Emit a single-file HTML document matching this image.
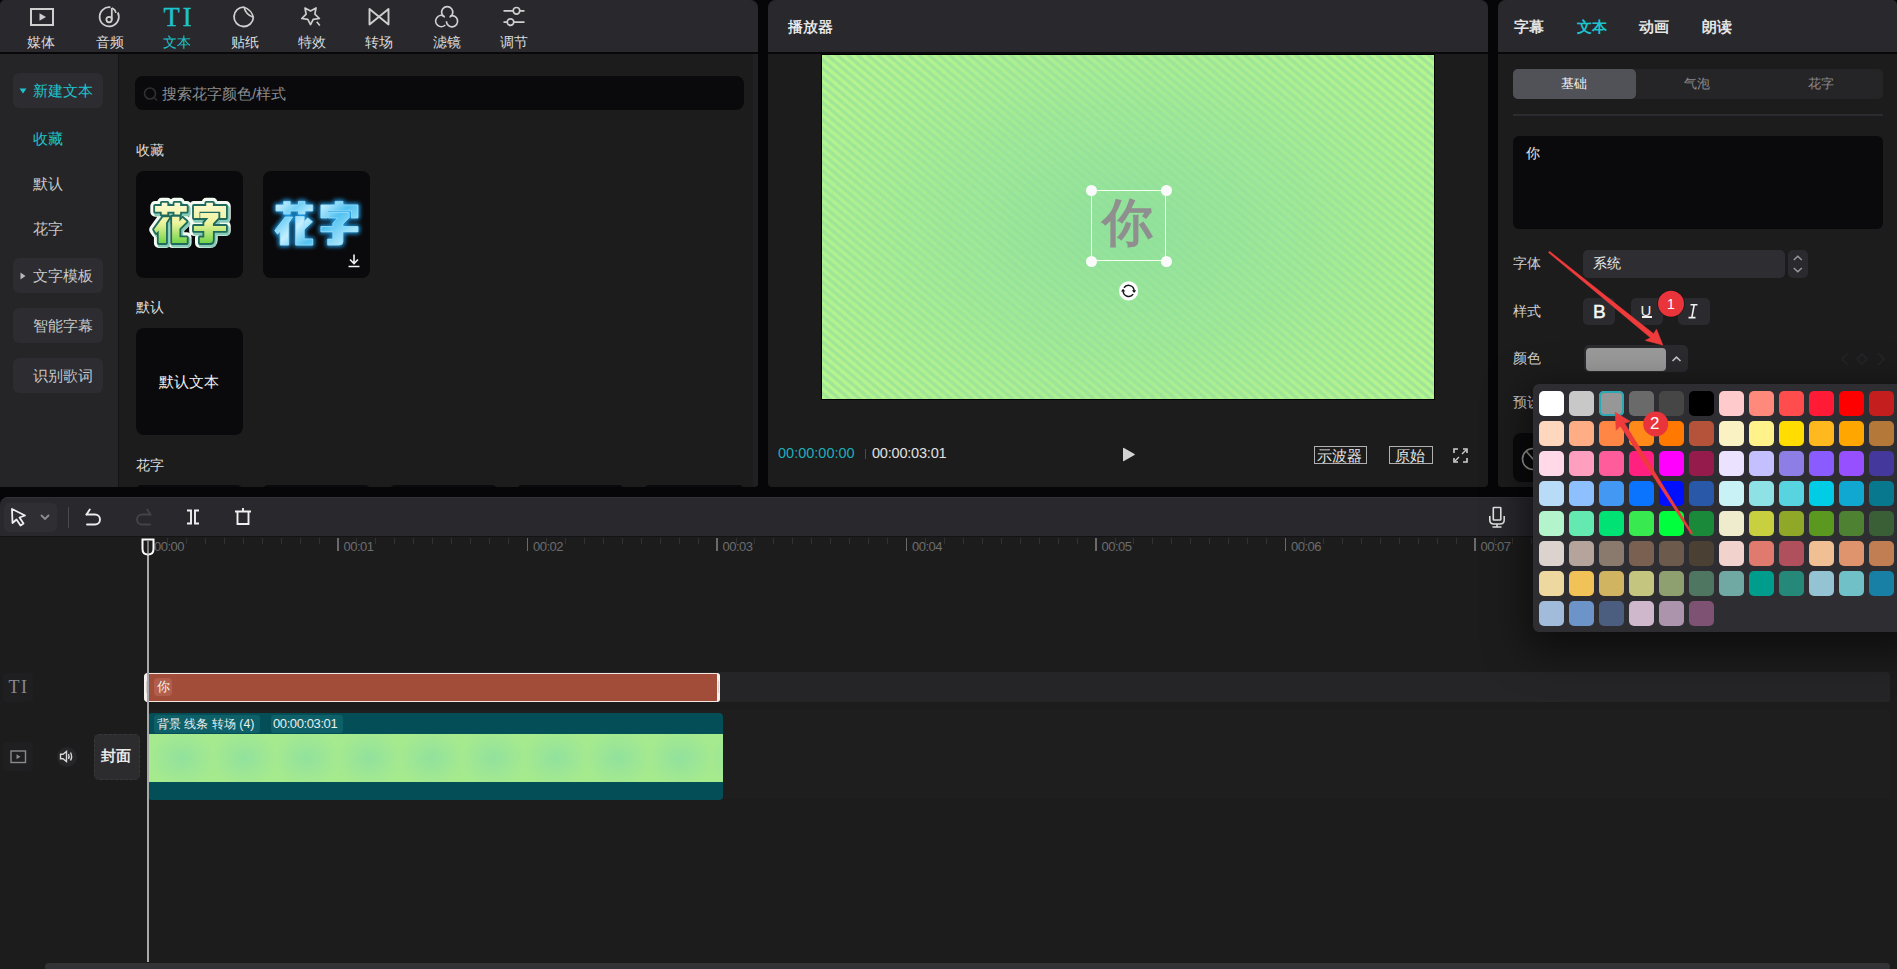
<!DOCTYPE html>
<html><head><meta charset="utf-8">
<style>
*{box-sizing:border-box;margin:0;padding:0}
html,body{width:1897px;height:969px;overflow:hidden;background:#060609;font-family:"Liberation Sans",sans-serif;color:#d8d8d8}
.a{position:absolute}
.panel{position:absolute;background:#1c1c1c;overflow:hidden}
.hdr{position:absolute;left:0;top:0;right:0;height:52px;background:#28282d;border-bottom:2px solid #08080b}
.t{position:absolute;white-space:nowrap;line-height:1}
.lbl{top:36px;font-size:13.5px;color:#dcdcdc;transform:translateX(-50%)}
.sbtn{left:13px;width:90px;height:35px;background:#2c2c31;border-radius:6px}
.sl{font-size:15px;color:#c8c8c8}
.cl{font-size:13.5px;color:#dedede}
.card{width:107px;height:107px;background:#0a0a0c;border-radius:8px}
.hd{width:11px;height:11px;border-radius:50%;background:#fafafa}
.rt{top:19px;font-size:15px;font-weight:700;color:#e4e4e4}
.rl{left:15px;font-size:13.5px;color:#d0d0d0}
.sb{top:298px;width:32px;height:27px;background:#2b2b2f;border-radius:5px}
.tk{top:43px;font-size:13px;color:#6c6c6e;letter-spacing:-0.5px}
.sw{width:25px;height:25px;border-radius:5px}
.ft{font-size:42px;font-weight:900;letter-spacing:-1px;line-height:1}
</style></head><body>

<!-- LEFT PANEL -->
<div class="panel" id="lp" style="left:0;top:0;width:758px;height:487px;border-radius:5px 8px 4px 0">

  <div class="hdr" style="height:54px"></div>
  <!-- toolbar icons -->
  <svg class="a" style="left:0;top:0" width="560" height="52" fill="none" stroke="#cfcfd0" stroke-width="2">
    <rect x="31" y="9" width="22" height="16" />
    <path d="M39.5 13.2 L46 17 L39.5 20.8 Z" fill="#cfcfd0" stroke="none"/>
    <path d="M117.8 12.5 A9.6 9.6 0 1 1 110.5 7.3" stroke-width="1.8"/>
    <path d="M111.8 8 V19.5" stroke-width="1.8"/>
    <circle cx="109.1" cy="19.6" r="2.7" stroke-width="1.8"/>
    <path d="M111.8 8 Q115.5 9.5 115.8 13" stroke-width="1.7"/>
    <path d="M253.4 17.3 A9.7 9.7 0 1 1 244.1 7.1" stroke-width="1.8"/>
    <path d="M244.1 7.1 Q245.5 14.5 253.4 17.3" stroke-width="1.7"/>
    <path d="M244.1 7.1 Q251.5 10 253.4 17.3" stroke-width="1.5"/>
    <path d="M310.5 24.6 L307.8 19.3 L301.8 18.5 L306.1 14.2 L305.0 8.0 L310.5 11.0 L316.0 8.0 L314.9 14.2 L319.4 18.5 L313.2 19.3 Z" stroke-width="1.7" stroke-linejoin="round"/>
    <path d="M316.8 21.8 L319.8 25.6" stroke-width="1.6"/>
    <path d="M369.5 9 L388.5 24.5 V9 L369.5 24.5 Z" stroke-width="1.9" stroke-linejoin="round"/>
    <path d="M444.8 17.3 A5.6 5.6 0 1 1 449.6 17.3" stroke-width="1.7"/>
    <path d="M445.3 25.0 A5.6 5.6 0 1 1 444.1 16.2" stroke-width="1.7"/>
    <path d="M450.1 16.0 A5.6 5.6 0 1 1 446.4 21.3" stroke-width="1.7"/>
    <path d="M503.5 10.8 H513 M520 10.8 H524.5 M503.5 22.1 H507 M514 22.1 H524.5" stroke-width="1.7"/>
    <circle cx="516.5" cy="10.8" r="3.3" stroke-width="1.7"/>
    <circle cx="510.5" cy="22.1" r="3.3" stroke-width="1.7"/>
  </svg>
  <div class="t" style="left:163.5px;top:4.2px;font-family:'Liberation Serif',serif;font-size:26.5px;color:#1ec4cd;letter-spacing:3px;-webkit-text-stroke:0.4px #1ec4cd">TI</div>
  <div class="t lbl" style="left:41px">媒体</div>
  <div class="t lbl" style="left:109.6px">音频</div>
  <div class="t lbl" style="left:176.5px;color:#1ec4cd">文本</div>
  <div class="t lbl" style="left:244.5px">贴纸</div>
  <div class="t lbl" style="left:311.7px">特效</div>
  <div class="t lbl" style="left:379px">转场</div>
  <div class="t lbl" style="left:446.5px">滤镜</div>
  <div class="t lbl" style="left:514px">调节</div>

  <div class="a" style="left:0;top:54px;width:118px;height:433px;background:#252527"></div>
  <div class="a" style="left:118px;top:54px;width:1px;height:433px;background:#141416"></div>
  <div class="a" style="left:753px;top:54px;width:5px;height:433px;background:#202022"></div>
  <!-- sidebar -->
  <div class="a sbtn" style="top:73px"></div>
  <svg class="a" style="left:19px;top:88px" width="8" height="6"><path d="M0.5 0.5 H7.5 L4 5.5 Z" fill="#1ec4cd"/></svg>
  <div class="t sl" style="left:33px;top:83px;color:#1ec4cd">新建文本</div>
  <div class="t sl" style="left:33px;top:131px;color:#1ec4cd">收藏</div>
  <div class="t sl" style="left:33px;top:176px">默认</div>
  <div class="t sl" style="left:33px;top:221px">花字</div>
  <div class="a sbtn" style="top:258px"></div>
  <svg class="a" style="left:20px;top:272px" width="6" height="8"><path d="M0.5 0.5 V7.5 L5.5 4 Z" fill="#b8b8b8"/></svg>
  <div class="t sl" style="left:33px;top:268px">文字模板</div>
  <div class="a sbtn" style="top:308px"></div>
  <div class="t sl" style="left:33px;top:318px">智能字幕</div>
  <div class="a sbtn" style="top:358px"></div>
  <div class="t sl" style="left:33px;top:368px">识别歌词</div>

  <!-- content -->
  <div class="a" style="left:135px;top:76px;width:609px;height:34px;background:#0a0a0c;border-radius:8px"></div>
  <svg class="a" style="left:142px;top:86px" width="18" height="18" fill="none" stroke="#303033" stroke-width="1.6"><circle cx="8" cy="7.5" r="5.5"/><path d="M12 11.5 L15 14.5"/></svg>
  <div class="t" style="left:162px;top:86px;font-size:15px;color:#8c8c8e">搜索花字颜色/样式</div>
  <div class="t cl" style="left:136px;top:144px">收藏</div>

  <div class="a card" style="left:136px;top:171px;overflow:hidden">
    <svg class="a" style="left:0;top:0" width="107" height="107" stroke-linejoin="round" stroke-linecap="round">
      <defs>
        <path id="hz" d="M1.8 4.4 H9.5 V0.9 H16 V4.4 H24.2 V0.9 H30.8 V4.4 H38.5 V10.5 H30.8 V13.6 H24.2 V10.5 H16 V13.6 H9.5 V10.5 H1.8 Z M11 16.5 H18.5 L14.5 22.5 V44.6 H6 V31 L3.2 33.6 L0.6 29.9 Z M21.5 16 H30 V38.4 H38.5 V44.6 H21.5 Z M33.5 17.3 L38.3 21.3 L30 29 L30 21.2 Z M61 0.9 H68.7 V4.4 H83.8 V17.5 H77.2 V10.5 H53.2 V17.5 H46.7 V4.4 H61 Z M54 12 H75 V17.2 L68.7 23.5 V26 H83.8 V31.4 H68.7 V41 Q68.7 44.6 65 44.6 H53.5 V38.6 H58.7 V31.4 H46.7 V26 H58.7 V22.5 L63.5 17.5 H54 Z"/>
        <linearGradient id="g1" x1="0" y1="0" x2="0" y2="1"><stop offset="0" stop-color="#fbf8d2"/><stop offset="0.5" stop-color="#eef49c"/><stop offset="1" stop-color="#72d44a"/></linearGradient>
        <linearGradient id="g2" x1="0" y1="0" x2="1" y2="0.6"><stop offset="0" stop-color="#e2f6ff"/><stop offset="0.25" stop-color="#70d0f5"/><stop offset="0.45" stop-color="#c4efff"/><stop offset="0.7" stop-color="#52c2f0"/><stop offset="1" stop-color="#a6e4fb"/></linearGradient>
      </defs>
      <g transform="translate(17.5 31) scale(0.865 0.92)">
        <use href="#hz" fill="#f4fbf2" stroke="#f4fbf2" stroke-width="11"/>
        <use href="#hz" transform="translate(1.6 2.2)" fill="#86ccb6" stroke="#86ccb6" stroke-width="5.5"/>
        <use href="#hz" fill="#1f6a5c" stroke="#1f6a5c" stroke-width="4.2"/>
        <use href="#hz" fill="url(#g1)"/>
      </g>
    </svg>
  </div>
  <div class="a card" style="left:263px;top:171px;overflow:hidden">
    <svg class="a" style="left:0;top:0" width="107" height="107" stroke-linejoin="round">
      <g transform="translate(11.2 29.5)">
        <use href="#hz" fill="#1e9be6" stroke="#1e9be6" stroke-width="3.5" style="filter:blur(2px)"/>
        <use href="#hz" fill="url(#g2)" stroke="#9fe0fa" stroke-width="0.8"/>
      </g>
    </svg>
    <svg class="a" style="left:84px;top:82px" width="14" height="15" fill="none" stroke="#f4f4f4" stroke-width="1.6"><path d="M7 1.5 V10 M3 6.5 L7 10.5 L11 6.5 M1.5 13.5 H12.5"/></svg>
  </div>
  <div class="t cl" style="left:136px;top:301px">默认</div>
  <div class="a card" style="left:136px;top:328px"></div>
  <div class="t" style="left:159px;top:374px;font-size:15px;color:#f0f0f0">默认文本</div>
  <div class="t cl" style="left:136px;top:459px">花字</div>
  <div class="a" style="left:136px;top:485px;width:106px;height:10px;background:#0a0a0c;border-radius:8px"></div>
  <div class="a" style="left:263px;top:485px;width:107px;height:10px;background:#0a0a0c;border-radius:8px"></div>
  <div class="a" style="left:390px;top:485px;width:107px;height:10px;background:#0a0a0c;border-radius:8px"></div>
  <div class="a" style="left:517px;top:485px;width:107px;height:10px;background:#0a0a0c;border-radius:8px"></div>
  <div class="a" style="left:644px;top:485px;width:100px;height:10px;background:#0a0a0c;border-radius:8px"></div>
</div>

<!-- PLAYER PANEL -->
<div class="panel" id="pp" style="left:768px;top:0;width:720px;height:487px;border-radius:8px 8px 4px 4px">
  <div class="hdr" style="height:54px"></div>
  <div class="t" style="left:20px;top:18.5px;font-size:15px;color:#f6f6f6;-webkit-text-stroke:0.3px #f6f6f6">播放器</div>
  <div class="a" style="left:53px;top:54px;width:614px;height:346px;background:#000"></div>
  <div class="a" id="video" style="left:54px;top:55px;width:612px;height:344px;overflow:hidden;background:radial-gradient(ellipse 340px 230px at 306px 172px, #8fe09c 0%, #98e49a 45%, #a6ea92 100%)">
    <div class="a" style="left:0;top:0;width:612px;height:344px;
      background:repeating-linear-gradient(40deg, rgba(188,248,140,0.75) 0px, rgba(188,248,140,0.75) 2.9px, rgba(150,224,160,0.4) 3.3px, rgba(150,224,160,0.4) 6.2px, rgba(188,248,140,0.75) 6.55px);
      -webkit-mask-image:radial-gradient(ellipse 380px 250px at 306px 172px, rgba(0,0,0,0.05) 0%, rgba(0,0,0,0.35) 50%, rgba(0,0,0,1) 100%)"></div>
  </div>
  <div class="a" style="left:323px;top:190px;width:75px;height:71px;border:1.5px solid #f4fff0"></div>
  <div class="t" style="left:334px;top:197px;font-size:51px;color:#8f8f8f;-webkit-text-stroke:1.6px #8f8f8f">你</div>
  <div class="a hd" style="left:317.5px;top:184.5px"></div>
  <div class="a hd" style="left:392.5px;top:184.5px"></div>
  <div class="a hd" style="left:317.5px;top:255.5px"></div>
  <div class="a hd" style="left:392.5px;top:255.5px"></div>
  <svg class="a" style="left:350px;top:281px" width="21" height="21">
    <circle cx="10.6" cy="9.9" r="9.6" fill="#fff"/>
    <path d="M6.0 6.7 A5.6 5.6 0 0 1 16.1 9.6" fill="none" stroke="#141414" stroke-width="1.5"/>
    <path d="M15.2 13.1 A5.6 5.6 0 0 1 5.1 10.2" fill="none" stroke="#141414" stroke-width="1.5"/>
    <path d="M13.9 9.2 L18.2 9.2 L16.1 12 Z" fill="#141414"/>
    <path d="M3.0 10.6 L7.3 10.6 L5.1 7.8 Z" fill="#141414"/>
  </svg>
  <div class="t" style="left:10px;top:446px;font-size:14.5px;color:#20adbb">00:00:00:00</div>
  <div class="a" style="left:97px;top:449px;width:1px;height:10px;background:#4a4a4a"></div>
  <div class="t" style="left:104px;top:446px;font-size:14.5px;color:#e0e0e0;letter-spacing:-0.2px">00:00:03:01</div>
  <svg class="a" style="left:354px;top:447px" width="14" height="16"><path d="M1 1.5 Q1 0.5 2 1 L12.5 7 Q13.3 7.5 12.5 8 L2 14 Q1 14.5 1 13.5 Z" fill="#d2d2d2"/></svg>
  <div class="a" style="left:546px;top:446px;width:53px;height:18px;border:1.5px solid #b0b0b0"></div>
  <div class="t" style="left:549px;top:447.5px;font-size:15px;color:#e6e6e6">示波器</div>
  <div class="a" style="left:621px;top:446px;width:44px;height:18px;border:1.5px solid #b0b0b0"></div>
  <div class="t" style="left:627px;top:447.5px;font-size:15px;color:#e6e6e6">原始</div>
  <svg class="a" style="left:685px;top:448px" width="15" height="15" fill="none" stroke="#d0d0d0" stroke-width="1.6">
    <path d="M1 5 V1 H5 M10 1 H14 V5 M14 10 V14 H10 M5 14 H1 V10"/>
    <path d="M9 6 L13 2 M6 9 L2 13" stroke-width="1.3"/>
  </svg>
</div>

<!-- RIGHT PANEL -->
<div class="panel" id="rp" style="left:1498px;top:0;width:399px;height:487px;border-radius:8px 5px 0 4px">
  <div class="hdr" style="height:54px"></div>
  <div class="t rt" style="left:16px">字幕</div>
  <div class="t rt" style="left:79px;color:#1ec4cd">文本</div>
  <div class="t rt" style="left:141px">动画</div>
  <div class="t rt" style="left:204px">朗读</div>
  <div class="a" style="left:15px;top:69px;width:370px;height:30px;background:#252528;border-radius:5px"></div>
  <div class="a" style="left:15px;top:69px;width:123px;height:30px;background:#515158;border-radius:5px"></div>
  <div class="t" style="left:63px;top:77px;font-size:13px;color:#f4f4f4">基础</div>
  <div class="t" style="left:186px;top:77px;font-size:13px;color:#8a8a8c">气泡</div>
  <div class="t" style="left:310px;top:77px;font-size:13px;color:#8a8a8c">花字</div>
  <div class="a" style="left:15px;top:114px;width:370px;height:2px;background:#2c2c30"></div>
  <div class="a" style="left:15px;top:136px;width:370px;height:93px;background:#0a0a0c;border-radius:6px"></div>
  <div class="t" style="left:28px;top:146px;font-size:14px;color:#eaeaea">你</div>
  <div class="t rl" style="top:257px">字体</div>
  <div class="a" style="left:85px;top:250px;width:202px;height:28px;background:#2e2e32;border-radius:5px"></div>
  <div class="t" style="left:95px;top:257px;font-size:13.5px;color:#e8e8e8">系统</div>
  <div class="a" style="left:290px;top:250px;width:20px;height:28px;background:#2a2a2e;border-radius:5px"></div>
  <svg class="a" style="left:290px;top:250px" width="20" height="28" fill="none" stroke="#9a9a9c" stroke-width="1.4"><path d="M5.8 10 L9.8 6.3 L13.8 10 M5.8 18 L9.8 21.7 L13.8 18"/></svg>
  <div class="t rl" style="top:305px">样式</div>
  <div class="a sb" style="left:85px"></div>
  <div class="t" style="left:95px;top:301.5px;font-size:19px;color:#f6f6f6;-webkit-text-stroke:0.5px #f6f6f6">B</div>
  <div class="a sb" style="left:133px"></div>
  <div class="t" style="left:142.5px;top:302.5px;font-size:15px;color:#f0f0f0">U</div>
  <div class="a" style="left:143.5px;top:316.3px;width:10.5px;height:1.7px;background:#f0f0f0"></div>
  <div class="a sb" style="left:180px"></div>
  <svg class="a" style="left:188px;top:302px" width="14" height="18" fill="none" stroke="#f0f0f0" stroke-width="1.6"><path d="M4.5 2.8 H11.5 M2.5 15.6 H9.5 M8.2 2.8 L5.8 15.6"/></svg>
  <div class="t rl" style="top:352px">颜色</div>
  <div class="a" style="left:86px;top:345px;width:104px;height:27px;background:#2b2b2f;border-radius:5px"></div>
  <div class="a" style="left:87.5px;top:347.5px;width:80.5px;height:23px;background:#9a9a9a;border-radius:4px"></div>
  <svg class="a" style="left:170px;top:352px" width="17" height="14" fill="none" stroke="#c6c6c8" stroke-width="1.6"><path d="M4.5 9 L8.5 5.2 L12.5 9"/></svg>
  <svg class="a" style="left:340px;top:351px" width="50" height="16" fill="none" stroke="#252529" stroke-width="1.6"><path d="M10 2 L4 8 L10 14 M40 2 L46 8 L40 14 M24 3 L29 8 L24 13 L19 8 Z"/></svg>
  <div class="t rl" style="top:396px">预设</div>
  <div class="a" style="left:15px;top:433px;width:70px;height:49px;background:#0a0a0c;border-radius:8px"></div>
  <svg class="a" style="left:22px;top:446px" width="26" height="26" fill="none" stroke="#9a9a9a" stroke-width="1.6"><circle cx="13" cy="13" r="10.5"/><path d="M6 5 L20 21"/></svg>
</div>

<!-- TIMELINE -->
<div class="panel" id="tl" style="left:0;top:497px;width:1897px;height:472px;border-radius:8px 8px 0 0">
  <div class="a" style="left:0;top:0;width:1897px;height:40px;background:#28282d;border-bottom:1px solid #141416"></div>
  <div class="a" style="left:0;top:0;width:1897px;height:1px;background:#313136"></div>
  <div class="a" style="left:4px;top:6px;width:53px;height:29px;background:#2e2e33;border-radius:5px"></div>
  <svg class="a" style="left:8px;top:8px" width="24" height="26" fill="none" stroke="#f0f0f0" stroke-width="1.8" stroke-linejoin="round"><path d="M4 4 L17 10.5 L11.5 12.5 L15.5 18.5 L12.5 20.5 L8.5 14.5 L4.5 18 Z"/></svg>
  <svg class="a" style="left:38px;top:15px" width="14" height="10" fill="none" stroke="#8e8e90" stroke-width="1.8"><path d="M3 3 L7 7 L11 3"/></svg>
  <div class="a" style="left:68px;top:10px;width:1px;height:21px;background:#4a4a4e"></div>
  <svg class="a" style="left:82px;top:9px" width="22" height="20" fill="none" stroke="#ececec" stroke-width="1.9" stroke-linejoin="round" stroke-linecap="round"><path d="M4.5 8.5 H13 A5 5 0 0 1 13 18.5 H5"/><path d="M7.8 3.5 L4.5 8.5"/></svg>
  <svg class="a" style="left:133px;top:9px" width="22" height="20" fill="none" stroke="#444448" stroke-width="1.9" stroke-linejoin="round" stroke-linecap="round"><path d="M17.5 8.5 H9 A5 5 0 0 0 9 18.5 H17"/><path d="M14.2 3.5 L17.5 8.5"/></svg>
  <svg class="a" style="left:184px;top:10px" width="18" height="20" fill="none" stroke="#f0f0f0" stroke-width="1.9"><path d="M3 3.5 H7 V16.5 H3 M15 3.5 H11 V16.5 H15"/></svg>
  <svg class="a" style="left:232px;top:9px" width="22" height="22" fill="none" stroke="#f0f0f0" stroke-width="1.9"><path d="M3 5.5 H19 M11 2 V5.5 M5.5 5.5 V18 H16.5 V5.5"/></svg>
  <svg class="a" style="left:1486px;top:9px" width="22" height="22" fill="none" stroke="#e4e4e4" stroke-width="1.6"><rect x="7.3" y="1.5" width="7.5" height="12.5" rx="0.5"/><path d="M3.8 10 V14 Q3.8 18 8 18 H14 Q18.2 18 18.2 14 V10 M11 18 V21 M6.5 21 H15.5"/></svg>
  <div class="a" style="left:0;top:41px;width:1897px;height:431px;background:#1c1c1c"></div>
<div class="a" style="left:166.9px;top:41px;width:1px;height:6px;background:#323235"></div>
<div class="a" style="left:185.9px;top:41px;width:1px;height:6px;background:#323235"></div>
<div class="a" style="left:204.8px;top:41px;width:1px;height:6px;background:#323235"></div>
<div class="a" style="left:223.8px;top:41px;width:1px;height:6px;background:#323235"></div>
<div class="a" style="left:242.8px;top:41px;width:1px;height:6px;background:#323235"></div>
<div class="a" style="left:261.7px;top:41px;width:1px;height:6px;background:#323235"></div>
<div class="a" style="left:280.6px;top:41px;width:1px;height:6px;background:#323235"></div>
<div class="a" style="left:299.6px;top:41px;width:1px;height:6px;background:#323235"></div>
<div class="a" style="left:318.5px;top:41px;width:1px;height:6px;background:#323235"></div>
<div class="t tk" style="left:154.0px">00:00</div>
<div class="a" style="left:356.4px;top:41px;width:1px;height:6px;background:#323235"></div>
<div class="a" style="left:375.4px;top:41px;width:1px;height:6px;background:#323235"></div>
<div class="a" style="left:394.4px;top:41px;width:1px;height:6px;background:#323235"></div>
<div class="a" style="left:413.3px;top:41px;width:1px;height:6px;background:#323235"></div>
<div class="a" style="left:432.2px;top:41px;width:1px;height:6px;background:#323235"></div>
<div class="a" style="left:451.2px;top:41px;width:1px;height:6px;background:#323235"></div>
<div class="a" style="left:470.1px;top:41px;width:1px;height:6px;background:#323235"></div>
<div class="a" style="left:489.1px;top:41px;width:1px;height:6px;background:#323235"></div>
<div class="a" style="left:508.0px;top:41px;width:1px;height:6px;background:#323235"></div>
<div class="a" style="left:337.0px;top:41px;width:1.5px;height:13px;background:#6a6a6c"></div>
<div class="t tk" style="left:343.5px">00:01</div>
<div class="a" style="left:546.0px;top:41px;width:1px;height:6px;background:#323235"></div>
<div class="a" style="left:564.9px;top:41px;width:1px;height:6px;background:#323235"></div>
<div class="a" style="left:583.9px;top:41px;width:1px;height:6px;background:#323235"></div>
<div class="a" style="left:602.8px;top:41px;width:1px;height:6px;background:#323235"></div>
<div class="a" style="left:621.8px;top:41px;width:1px;height:6px;background:#323235"></div>
<div class="a" style="left:640.7px;top:41px;width:1px;height:6px;background:#323235"></div>
<div class="a" style="left:659.6px;top:41px;width:1px;height:6px;background:#323235"></div>
<div class="a" style="left:678.6px;top:41px;width:1px;height:6px;background:#323235"></div>
<div class="a" style="left:697.5px;top:41px;width:1px;height:6px;background:#323235"></div>
<div class="a" style="left:526.5px;top:41px;width:1.5px;height:13px;background:#6a6a6c"></div>
<div class="t tk" style="left:533.0px">00:02</div>
<div class="a" style="left:735.5px;top:41px;width:1px;height:6px;background:#323235"></div>
<div class="a" style="left:754.4px;top:41px;width:1px;height:6px;background:#323235"></div>
<div class="a" style="left:773.4px;top:41px;width:1px;height:6px;background:#323235"></div>
<div class="a" style="left:792.3px;top:41px;width:1px;height:6px;background:#323235"></div>
<div class="a" style="left:811.2px;top:41px;width:1px;height:6px;background:#323235"></div>
<div class="a" style="left:830.2px;top:41px;width:1px;height:6px;background:#323235"></div>
<div class="a" style="left:849.1px;top:41px;width:1px;height:6px;background:#323235"></div>
<div class="a" style="left:868.1px;top:41px;width:1px;height:6px;background:#323235"></div>
<div class="a" style="left:887.0px;top:41px;width:1px;height:6px;background:#323235"></div>
<div class="a" style="left:716.0px;top:41px;width:1.5px;height:13px;background:#6a6a6c"></div>
<div class="t tk" style="left:722.5px">00:03</div>
<div class="a" style="left:925.0px;top:41px;width:1px;height:6px;background:#323235"></div>
<div class="a" style="left:943.9px;top:41px;width:1px;height:6px;background:#323235"></div>
<div class="a" style="left:962.9px;top:41px;width:1px;height:6px;background:#323235"></div>
<div class="a" style="left:981.8px;top:41px;width:1px;height:6px;background:#323235"></div>
<div class="a" style="left:1000.8px;top:41px;width:1px;height:6px;background:#323235"></div>
<div class="a" style="left:1019.7px;top:41px;width:1px;height:6px;background:#323235"></div>
<div class="a" style="left:1038.7px;top:41px;width:1px;height:6px;background:#323235"></div>
<div class="a" style="left:1057.6px;top:41px;width:1px;height:6px;background:#323235"></div>
<div class="a" style="left:1076.5px;top:41px;width:1px;height:6px;background:#323235"></div>
<div class="a" style="left:905.5px;top:41px;width:1.5px;height:13px;background:#6a6a6c"></div>
<div class="t tk" style="left:912.0px">00:04</div>
<div class="a" style="left:1114.5px;top:41px;width:1px;height:6px;background:#323235"></div>
<div class="a" style="left:1133.4px;top:41px;width:1px;height:6px;background:#323235"></div>
<div class="a" style="left:1152.3px;top:41px;width:1px;height:6px;background:#323235"></div>
<div class="a" style="left:1171.3px;top:41px;width:1px;height:6px;background:#323235"></div>
<div class="a" style="left:1190.2px;top:41px;width:1px;height:6px;background:#323235"></div>
<div class="a" style="left:1209.2px;top:41px;width:1px;height:6px;background:#323235"></div>
<div class="a" style="left:1228.2px;top:41px;width:1px;height:6px;background:#323235"></div>
<div class="a" style="left:1247.1px;top:41px;width:1px;height:6px;background:#323235"></div>
<div class="a" style="left:1266.0px;top:41px;width:1px;height:6px;background:#323235"></div>
<div class="a" style="left:1095.0px;top:41px;width:1.5px;height:13px;background:#6a6a6c"></div>
<div class="t tk" style="left:1101.5px">00:05</div>
<div class="a" style="left:1304.0px;top:41px;width:1px;height:6px;background:#323235"></div>
<div class="a" style="left:1322.9px;top:41px;width:1px;height:6px;background:#323235"></div>
<div class="a" style="left:1341.8px;top:41px;width:1px;height:6px;background:#323235"></div>
<div class="a" style="left:1360.8px;top:41px;width:1px;height:6px;background:#323235"></div>
<div class="a" style="left:1379.8px;top:41px;width:1px;height:6px;background:#323235"></div>
<div class="a" style="left:1398.7px;top:41px;width:1px;height:6px;background:#323235"></div>
<div class="a" style="left:1417.7px;top:41px;width:1px;height:6px;background:#323235"></div>
<div class="a" style="left:1436.6px;top:41px;width:1px;height:6px;background:#323235"></div>
<div class="a" style="left:1455.5px;top:41px;width:1px;height:6px;background:#323235"></div>
<div class="a" style="left:1284.5px;top:41px;width:1.5px;height:13px;background:#6a6a6c"></div>
<div class="t tk" style="left:1291.0px">00:06</div>
<div class="a" style="left:1493.5px;top:41px;width:1px;height:6px;background:#323235"></div>
<div class="a" style="left:1512.4px;top:41px;width:1px;height:6px;background:#323235"></div>
<div class="a" style="left:1531.3px;top:41px;width:1px;height:6px;background:#323235"></div>
<div class="a" style="left:1550.3px;top:41px;width:1px;height:6px;background:#323235"></div>
<div class="a" style="left:1569.2px;top:41px;width:1px;height:6px;background:#323235"></div>
<div class="a" style="left:1588.2px;top:41px;width:1px;height:6px;background:#323235"></div>
<div class="a" style="left:1607.2px;top:41px;width:1px;height:6px;background:#323235"></div>
<div class="a" style="left:1626.1px;top:41px;width:1px;height:6px;background:#323235"></div>
<div class="a" style="left:1645.0px;top:41px;width:1px;height:6px;background:#323235"></div>
<div class="a" style="left:1474.0px;top:41px;width:1.5px;height:13px;background:#6a6a6c"></div>
<div class="t tk" style="left:1480.5px">00:07</div>
<div class="a" style="left:1683.0px;top:41px;width:1px;height:6px;background:#323235"></div>
<div class="a" style="left:1701.9px;top:41px;width:1px;height:6px;background:#323235"></div>
<div class="a" style="left:1720.8px;top:41px;width:1px;height:6px;background:#323235"></div>
<div class="a" style="left:1739.8px;top:41px;width:1px;height:6px;background:#323235"></div>
<div class="a" style="left:1758.8px;top:41px;width:1px;height:6px;background:#323235"></div>
<div class="a" style="left:1777.7px;top:41px;width:1px;height:6px;background:#323235"></div>
<div class="a" style="left:1796.7px;top:41px;width:1px;height:6px;background:#323235"></div>
<div class="a" style="left:1815.6px;top:41px;width:1px;height:6px;background:#323235"></div>
<div class="a" style="left:1834.5px;top:41px;width:1px;height:6px;background:#323235"></div>
<div class="a" style="left:1663.5px;top:41px;width:1.5px;height:13px;background:#6a6a6c"></div>
<div class="t tk" style="left:1670.0px">00:08</div>
  <div class="a" style="left:145px;top:175px;width:1745px;height:30px;background:#252528;border-radius:3px"></div>
  <div class="a" style="left:148px;top:212px;width:1742px;height:90px;background:#1e1e1f;border-radius:3px"></div>
  <div class="a" style="left:3px;top:176px;width:30px;height:29px;background:#1f1f22;border-radius:4px"></div>
  <div class="t" style="left:8.5px;top:181px;font-family:'Liberation Serif',serif;font-size:18px;color:#8a8a8c;letter-spacing:1.5px">TI</div>
  <div class="a" style="left:144px;top:175.5px;width:576px;height:29px;background:#a24c3a;border:1.6px solid #f4e6e2;border-radius:4px"></div>
  <div class="a" style="left:144px;top:175.5px;width:4.5px;height:29px;background:#f6f0ee;border-radius:4px 0 0 4px"></div>
  <div class="a" style="left:716.5px;top:175.5px;width:3.5px;height:29px;background:#f6f0ee;border-radius:0 4px 4px 0"></div>
  <div class="a" style="left:146px;top:184px;width:1px;height:12px;background:#d8d0ce"></div>
  <div class="a" style="left:717.7px;top:184px;width:1px;height:12px;background:#d8d0ce"></div>
  <div class="a" style="left:154px;top:181px;width:18px;height:18px;background:#b25e4c;border-radius:4px"></div>
  <div class="t" style="left:157px;top:183px;font-size:13px;color:#f2f2f2">你</div>
  <div class="a" style="left:3px;top:245px;width:30px;height:29px;background:#1f1f22;border-radius:4px"></div>
  <svg class="a" style="left:10px;top:253px" width="17" height="14" fill="none" stroke="#8a8a8c" stroke-width="1.4"><rect x="1" y="1" width="14.5" height="11.5"/><path d="M6.5 4.3 L10.5 6.75 L6.5 9.2 Z" fill="#8a8a8c" stroke="none"/></svg>
  <div class="a" style="left:56.5px;top:249.5px;width:20px;height:20px;background:#262629;border-radius:50%"></div>
  <svg class="a" style="left:58px;top:251px" width="17" height="17" fill="none" stroke="#d8d8d8" stroke-width="1.4"><path d="M2.5 6.3 H5 L8.5 3.5 V13.5 L5 10.7 H2.5 Z"/><path d="M10.5 6 Q11.7 8.5 10.5 11 M12.5 4.5 Q14.7 8.5 12.5 12.5"/></svg>
  <div class="a" style="left:93.5px;top:236.5px;width:46.5px;height:46.5px;background:#2c2c2f;border-radius:5px;border:1px dashed #38383b"></div>
  <div class="t" style="left:101px;top:251px;font-size:15px;font-weight:700;color:#e8e8e8">封面</div>
  <div class="a" style="left:148px;top:216px;width:575px;height:87px;background:#044f57;border-radius:4px;overflow:hidden">
    <div class="a" id="strip" style="left:0;top:21px;width:575px;height:48px;
      background:radial-gradient(ellipse 34px 28px at 31px 24px, rgba(142,224,160,0.85), rgba(142,224,160,0) 100%) 3px 0/62.3px 48px repeat-x, #a6ea8e"></div>
    <div class="a" style="left:6px;top:2px;width:106px;height:18px;background:#0d5f68;border-radius:3px"></div>
    <div class="t" style="left:9px;top:4.5px;font-size:12.4px;color:#e8f0f0">背景 线条 转场 (4)</div>
    <div class="a" style="left:123px;top:2px;width:72px;height:18px;background:#0d5f68;border-radius:3px"></div>
    <div class="t" style="left:125px;top:4px;font-size:13px;color:#e8f0f0;letter-spacing:-0.4px">00:00:03:01</div>
  </div>
  <div class="a" style="left:147px;top:47px;width:2px;height:418px;background:#a8a8aa"></div>
  <svg class="a" style="left:140px;top:41px" width="16" height="19"><path d="M2.5 1.5 H13.5 V11 Q13.5 16.5 8 16.5 Q2.5 16.5 2.5 11 Z" fill="#1c1c1c" stroke="#fafafa" stroke-width="2"/><path d="M8 3 V17" stroke="#bbb" stroke-width="1.2"/></svg>
  <div class="a" style="left:45px;top:466px;width:1845px;height:8px;background:#333336;border-radius:4px"></div>
</div>


<!-- COLOR POPUP -->
<div class="a" style="left:1533px;top:384px;width:380px;height:248px;background:#2e2e32;border-radius:6px;box-shadow:0 12px 40px 6px rgba(0,0,0,0.55);z-index:5">
<div class="a sw" style="left:6px;top:6.5px;background:#ffffff"></div>
<div class="a sw" style="left:36px;top:6.5px;background:#c8c8c8"></div>
<div class="a sw" style="left:66px;top:6.5px;background:#979797;box-shadow:inset 0 0 0 2px #2aa9b4"></div>
<div class="a sw" style="left:96px;top:6.5px;background:#6a6a6a"></div>
<div class="a sw" style="left:126px;top:6.5px;background:#464646"></div>
<div class="a sw" style="left:156px;top:6.5px;background:#000000"></div>
<div class="a sw" style="left:186px;top:6.5px;background:#ffcacc"></div>
<div class="a sw" style="left:216px;top:6.5px;background:#ff8a7c"></div>
<div class="a sw" style="left:246px;top:6.5px;background:#ff4d4d"></div>
<div class="a sw" style="left:276px;top:6.5px;background:#ff1a36"></div>
<div class="a sw" style="left:306px;top:6.5px;background:#ff0000"></div>
<div class="a sw" style="left:336px;top:6.5px;background:#c41e1e"></div>
<div class="a sw" style="left:6px;top:36.5px;background:#ffd7bf"></div>
<div class="a sw" style="left:36px;top:36.5px;background:#ffad85"></div>
<div class="a sw" style="left:66px;top:36.5px;background:#ff8644"></div>
<div class="a sw" style="left:96px;top:36.5px;background:#ff8a1a"></div>
<div class="a sw" style="left:126px;top:36.5px;background:#ff7800"></div>
<div class="a sw" style="left:156px;top:36.5px;background:#b4533a"></div>
<div class="a sw" style="left:186px;top:36.5px;background:#fbf2c4"></div>
<div class="a sw" style="left:216px;top:36.5px;background:#fff28a"></div>
<div class="a sw" style="left:246px;top:36.5px;background:#ffdd00"></div>
<div class="a sw" style="left:276px;top:36.5px;background:#ffb81e"></div>
<div class="a sw" style="left:306px;top:36.5px;background:#ffa600"></div>
<div class="a sw" style="left:336px;top:36.5px;background:#b47838"></div>
<div class="a sw" style="left:6px;top:66.5px;background:#ffd9e8"></div>
<div class="a sw" style="left:36px;top:66.5px;background:#ff9fc0"></div>
<div class="a sw" style="left:66px;top:66.5px;background:#ff5c9c"></div>
<div class="a sw" style="left:96px;top:66.5px;background:#ff2080"></div>
<div class="a sw" style="left:126px;top:66.5px;background:#ff00ff"></div>
<div class="a sw" style="left:156px;top:66.5px;background:#951b4c"></div>
<div class="a sw" style="left:186px;top:66.5px;background:#ebe2ff"></div>
<div class="a sw" style="left:216px;top:66.5px;background:#c4c0ff"></div>
<div class="a sw" style="left:246px;top:66.5px;background:#8c7ee4"></div>
<div class="a sw" style="left:276px;top:66.5px;background:#8a5cff"></div>
<div class="a sw" style="left:306px;top:66.5px;background:#9650ff"></div>
<div class="a sw" style="left:336px;top:66.5px;background:#44389c"></div>
<div class="a sw" style="left:6px;top:96.5px;background:#b8dcf8"></div>
<div class="a sw" style="left:36px;top:96.5px;background:#8ec0ff"></div>
<div class="a sw" style="left:66px;top:96.5px;background:#4298f2"></div>
<div class="a sw" style="left:96px;top:96.5px;background:#0a74ff"></div>
<div class="a sw" style="left:126px;top:96.5px;background:#0010ff"></div>
<div class="a sw" style="left:156px;top:96.5px;background:#2a58a8"></div>
<div class="a sw" style="left:186px;top:96.5px;background:#c8f2f6"></div>
<div class="a sw" style="left:216px;top:96.5px;background:#8ee2e6"></div>
<div class="a sw" style="left:246px;top:96.5px;background:#58d4e0"></div>
<div class="a sw" style="left:276px;top:96.5px;background:#00cce6"></div>
<div class="a sw" style="left:306px;top:96.5px;background:#10a8d0"></div>
<div class="a sw" style="left:336px;top:96.5px;background:#08788e"></div>
<div class="a sw" style="left:6px;top:126.5px;background:#b4f4cc"></div>
<div class="a sw" style="left:36px;top:126.5px;background:#64eab0"></div>
<div class="a sw" style="left:66px;top:126.5px;background:#00e274"></div>
<div class="a sw" style="left:96px;top:126.5px;background:#38ea50"></div>
<div class="a sw" style="left:126px;top:126.5px;background:#00ff3c"></div>
<div class="a sw" style="left:156px;top:126.5px;background:#1a8a3a"></div>
<div class="a sw" style="left:186px;top:126.5px;background:#eeeccd"></div>
<div class="a sw" style="left:216px;top:126.5px;background:#c8d040"></div>
<div class="a sw" style="left:246px;top:126.5px;background:#90a828"></div>
<div class="a sw" style="left:276px;top:126.5px;background:#5a9820"></div>
<div class="a sw" style="left:306px;top:126.5px;background:#4e8232"></div>
<div class="a sw" style="left:336px;top:126.5px;background:#3a5e36"></div>
<div class="a sw" style="left:6px;top:156.5px;background:#dcd2ce"></div>
<div class="a sw" style="left:36px;top:156.5px;background:#b4a49c"></div>
<div class="a sw" style="left:66px;top:156.5px;background:#8a7a6e"></div>
<div class="a sw" style="left:96px;top:156.5px;background:#7a6050"></div>
<div class="a sw" style="left:126px;top:156.5px;background:#6c5a4c"></div>
<div class="a sw" style="left:156px;top:156.5px;background:#4a4034"></div>
<div class="a sw" style="left:186px;top:156.5px;background:#f2d2cc"></div>
<div class="a sw" style="left:216px;top:156.5px;background:#e07a6e"></div>
<div class="a sw" style="left:246px;top:156.5px;background:#b0505c"></div>
<div class="a sw" style="left:276px;top:156.5px;background:#f0c094"></div>
<div class="a sw" style="left:306px;top:156.5px;background:#e0946e"></div>
<div class="a sw" style="left:336px;top:156.5px;background:#c07e52"></div>
<div class="a sw" style="left:6px;top:186.5px;background:#eed8a0"></div>
<div class="a sw" style="left:36px;top:186.5px;background:#f0c258"></div>
<div class="a sw" style="left:66px;top:186.5px;background:#d0b462"></div>
<div class="a sw" style="left:96px;top:186.5px;background:#c4c680"></div>
<div class="a sw" style="left:126px;top:186.5px;background:#8ea070"></div>
<div class="a sw" style="left:156px;top:186.5px;background:#4e7660"></div>
<div class="a sw" style="left:186px;top:186.5px;background:#70a8a4"></div>
<div class="a sw" style="left:216px;top:186.5px;background:#009c8c"></div>
<div class="a sw" style="left:246px;top:186.5px;background:#268878"></div>
<div class="a sw" style="left:276px;top:186.5px;background:#94c4d4"></div>
<div class="a sw" style="left:306px;top:186.5px;background:#70c0c8"></div>
<div class="a sw" style="left:336px;top:186.5px;background:#1880a4"></div>
<div class="a sw" style="left:6px;top:216.5px;background:#a0bcda"></div>
<div class="a sw" style="left:36px;top:216.5px;background:#6c94c8"></div>
<div class="a sw" style="left:66px;top:216.5px;background:#4c5e80"></div>
<div class="a sw" style="left:96px;top:216.5px;background:#d0b8cc"></div>
<div class="a sw" style="left:126px;top:216.5px;background:#ac94ac"></div>
<div class="a sw" style="left:156px;top:216.5px;background:#7e5272"></div>
</div>
<!-- annotations -->
<svg class="a" style="left:0;top:0;z-index:6" width="1897" height="969">
  <path d="M1548.5 252.5 L1650.5 337.7 L1645.3 340.4 L1662.8 345.0 L1656.5 329.2 L1653.6 333.8 L1549.5 251.3 Z" fill="#ef3b3b" stroke="#ef3b3b" stroke-width="0.6" stroke-linejoin="round"/>
  <circle cx="1671" cy="303.8" r="13.8" fill="#161616" opacity="0.7"/><circle cx="1671" cy="303.8" r="13" fill="#e8343a"/>
  <path d="M1692.5 533.3 L1624.5 423.2 L1630.2 421.4 L1615.2 412.3 L1616.2 430.2 L1620.3 425.9 L1691.1 534.1 Z" fill="#ef3b3b" stroke="#ef3b3b" stroke-width="0.6" stroke-linejoin="round"/>
  <circle cx="1655.7" cy="423.9" r="12.5" fill="#e8343a"/>
</svg>
<div class="t" style="left:1667px;top:297px;font-size:14px;color:#fff;z-index:7">1</div>
<div class="t" style="left:1650px;top:415px;font-size:17px;color:#fff;z-index:7">2</div>
</body></html>
